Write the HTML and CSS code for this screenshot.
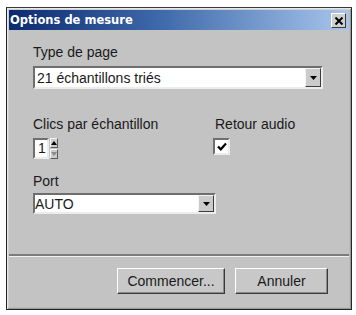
FILE: index.html
```html
<!DOCTYPE html>
<html lang="fr">

<head>
    <meta charset="UTF-8">
    <title>Options de mesure</title>
    <link rel="stylesheet" href="styles.css">
</head>

<body>

    <section class="dialog">
        <div class="titlebar">
            <span class="title">Options de mesure</span>
            <button class="close">
                <svg width="8" height="8" viewBox="0 0 8 8">
                    <path d="M0.5 0.5 L7.5 7.5 M7.5 0.5 L0.5 7.5" stroke="#000" stroke-width="2" />
                </svg>
            </button>
        </div>

        <div class="form">
            <p class="label">Type de page</p>
            <div class="combo combo_large">
                <span class="value">21 échantillons triés</span>
                <span class="drop">
                    <svg width="7" height="4" viewBox="0 0 7 4"><path d="M0 0 H7 L3.5 4 Z" fill="#000" /></svg>
                </span>
            </div>

            <div class="row">
                <div class="col_left">
                    <p class="label">Clics par échantillon</p>
                    <div class="spinner">
                        <span class="field">1</span>
                        <span class="arrows">
                            <span class="arrow up">
                                <svg width="6" height="4" viewBox="0 0 6 4"><path d="M0 4 H6 L3 0 Z" fill="#000" /></svg>
                            </span>
                            <span class="arrow down">
                                <svg width="6" height="4" viewBox="0 0 6 4"><path d="M0 0 H6 L3 4 Z" fill="#8a8a8a" /></svg>
                            </span>
                        </span>
                    </div>
                </div>
                <div class="col_right">
                    <p class="label">Retour audio</p>
                    <span class="checkbox">
                        <svg width="10" height="9" viewBox="0 0 10 9">
                            <path d="M1 4.5 L3.8 7.3 L9 1.5" fill="none" stroke="#000" stroke-width="2.2" />
                        </svg>
                    </span>
                </div>
            </div>

            <p class="label label_port">Port</p>
            <div class="combo combo_small">
                <span class="value">AUTO</span>
                <span class="drop">
                    <svg width="7" height="4" viewBox="0 0 7 4"><path d="M0 0 H7 L3.5 4 Z" fill="#000" /></svg>
                </span>
            </div>
        </div>

        <div class="separator"></div>

        <div class="buttons">
            <button class="knap knap_start">Commencer...</button>
            <button class="knap knap_cancel">Annuler</button>
        </div>
    </section>

</body>

</html>
```

FILE: styles.css
```css
body {
    margin: 0;
    background-color: #ffffff;
    font-family: "Liberation Sans", Arial, sans-serif;
    font-size: 14px;
    color: #1a1a1a;
}

p {
    margin: 0;
}

.dialog {
    box-sizing: border-box;
    width: 346px;
    height: 303px;
    margin: 7px 0 0 6px;
    border: 1px solid #262626;
    border-top-color: #3a3a3a;
    box-shadow: inset 1px 1px 0 #e8e8e8, inset -1px -1px 0 #9a9a9a, inset 2px 2px 0 #d0d0d0, inset -2px -2px 0 #bcbcbc;
    background-color: #c3c3c3;
    padding: 2px;
    display: flex;
    flex-direction: column;
}

.titlebar {
    height: 20px;
    display: flex;
    align-items: center;
    justify-content: space-between;
    padding: 0 3px 0 1px;
    background: linear-gradient(to right, #0c2a70 0%, #3f6aab 45%, #a8c6ec 100%);
}

.title {
    color: #ffffff;
    font-family: "DejaVu Sans", Tahoma, sans-serif;
    font-weight: bold;
    font-size: 11.5px;
}

.close {
    box-sizing: border-box;
    width: 15px;
    height: 15px;
    padding: 0;
    margin-top: 1px;
    display: flex;
    align-items: center;
    justify-content: center;
    background-color: #d0d0d0;
    border: 1px solid;
    border-color: #ffffff #3a3a3a #3a3a3a #ffffff;
}

.form {
    padding: 15px 0 0 24px;
}

.label {
    line-height: 15px;
    height: 15px;
}

.combo {
    box-sizing: border-box;
    display: flex;
    align-items: center;
    justify-content: space-between;
    background-color: #ffffff;
    border: 2px solid;
    border-color: #6e6e6e #ececec #ececec #6e6e6e;
}

.combo_large {
    width: 290px;
    height: 23px;
    margin-top: 6px;
    padding-left: 2px;
}

.combo_small {
    width: 183px;
    height: 21px;
    margin-top: 4px;
    padding-left: 0;
}

.drop {
    box-sizing: border-box;
    width: 16px;
    height: 100%;
    display: flex;
    align-items: center;
    justify-content: center;
    background-color: #cbcbcb;
    border: 1px solid;
    border-color: #f4f4f4 #3c3c3c #3c3c3c #f4f4f4;
}

.row {
    display: flex;
    margin-top: 28px;
}

.col_left {
    width: 180px;
}

.col_right .label {
    padding-left: 2px;
}

.spinner {
    display: flex;
    margin-top: 6px;
    height: 21px;
}

.field {
    box-sizing: border-box;
    width: 16px;
    height: 21px;
    padding: 1px 0 0 3px;
    background-color: #ffffff;
    border: 2px solid;
    border-color: #6e6e6e #ececec #ececec #6e6e6e;
    line-height: 15px;
}

.arrows {
    display: flex;
    flex-direction: column;
    margin-left: 1px;
    gap: 1px;
}

.arrow {
    box-sizing: border-box;
    width: 8px;
    height: 10px;
    display: flex;
    align-items: center;
    justify-content: center;
    background-color: #cbcbcb;
    border: 1px solid;
    border-color: #f4f4f4 #5a5a5a #5a5a5a #f4f4f4;
}

.checkbox {
    box-sizing: border-box;
    display: flex;
    align-items: center;
    justify-content: center;
    width: 17px;
    height: 17px;
    margin-top: 6px;
    background-color: #ffffff;
    border: 2px solid;
    border-color: #6e6e6e #ececec #ececec #6e6e6e;
}

.label_port {
    margin-top: 15px;
}

.separator {
    margin-top: 40px;
    height: 2px;
    background-color: #7c7c7c;
    border-bottom: 1px solid #f2f2f2;
}

.buttons {
    display: flex;
    justify-content: flex-end;
    gap: 10px;
    padding: 11px 21px 0 0;
}

.knap {
    box-sizing: border-box;
    height: 26px;
    padding: 0;
    font-family: "Liberation Sans", Arial, sans-serif;
    font-size: 14px;
    color: #1a1a1a;
    background-color: #c8c8c8;
    border: 1px solid;
    border-color: #ffffff #3a3a3a #3a3a3a #ffffff;
    box-shadow: inset -1px -1px 0 #8a8a8a;
}

.knap_start {
    width: 108px;
}

.knap_cancel {
    width: 93px;
}
```
